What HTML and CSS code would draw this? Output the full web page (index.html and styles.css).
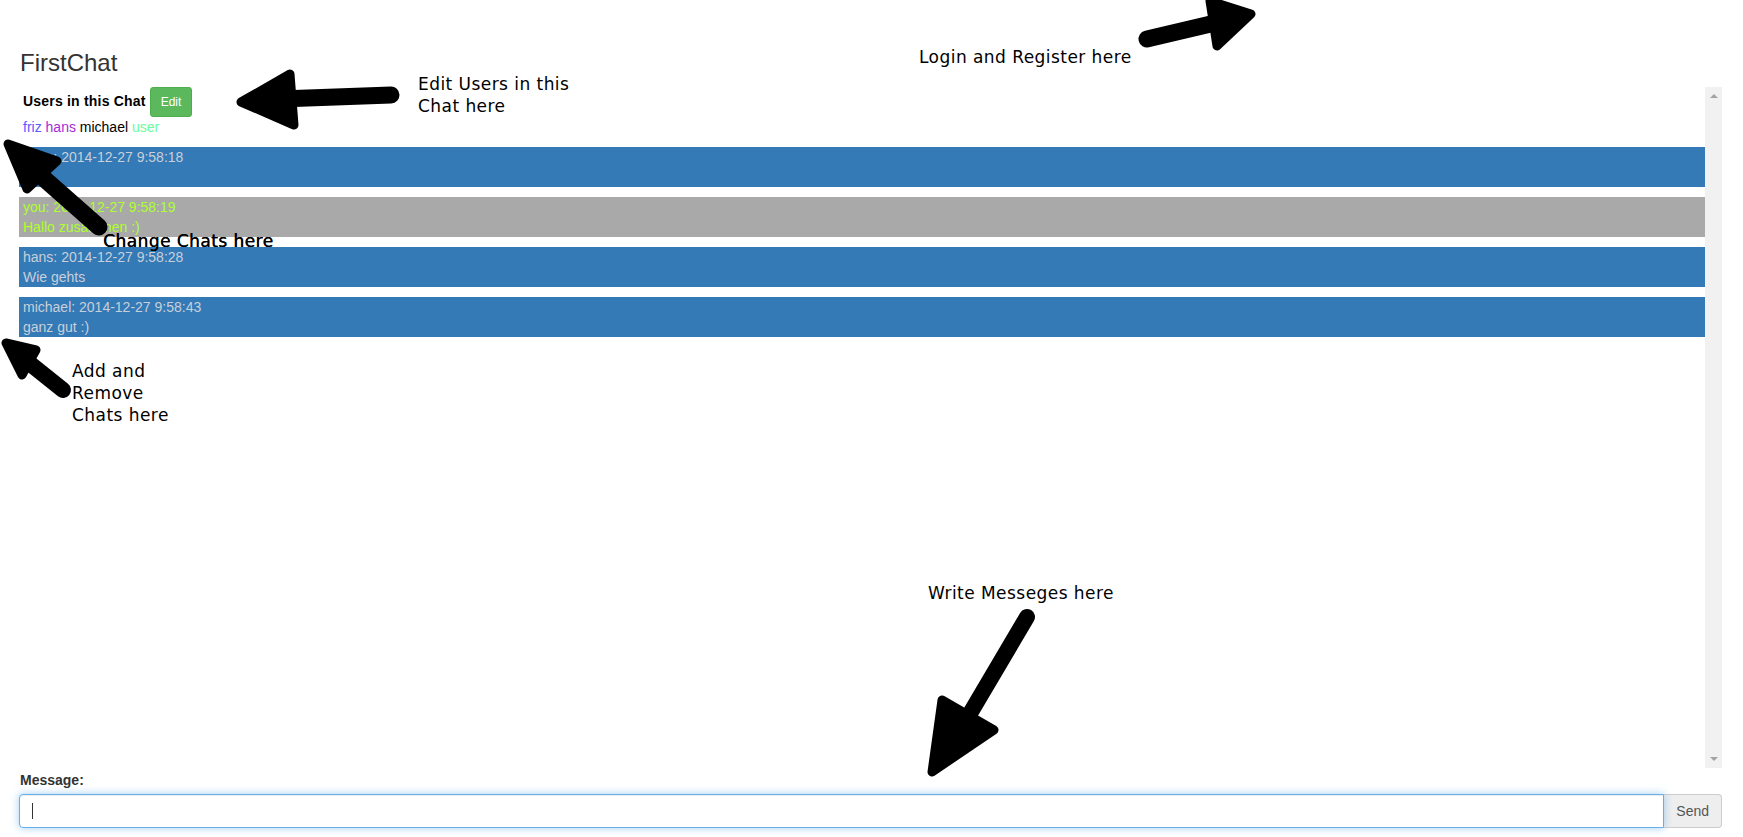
FILE: index.html
```html
<!DOCTYPE html>
<html lang="de">
<head>
<meta charset="utf-8">
<title>FirstChat</title>
<link rel="stylesheet" href="styles.css">
</head>
<body>
<div class="page">
  <h3 class="brand">FirstChat</h3>
  <div class="chat-frame">
    <div class="chat-scroll">
      <div class="users-head">
        <span class="users-title">Users in this Chat</span>
        <button class="btn-edit">Edit</button>
      </div>
      <div class="users-list">
        <span class="u-friz">friz</span> <span class="u-hans">hans</span> <span class="u-michael">michael</span> <span class="u-user">user</span>
      </div>
      <div class="msg msg-other">
        <div>hans: 2014-12-27 9:58:18</div>
        <div>&nbsp;</div>
      </div>
      <div class="msg msg-own">
        <div>you: 2014-12-27 9:58:19</div>
        <div>Hallo zusammen :)</div>
      </div>
      <div class="msg msg-other">
        <div>hans: 2014-12-27 9:58:28</div>
        <div>Wie gehts</div>
      </div>
      <div class="msg msg-other">
        <div>michael: 2014-12-27 9:58:43</div>
        <div>ganz gut :)</div>
      </div>
    </div>
    <div class="scrollbar">
      <span class="sb-up"></span>
      <span class="sb-down"></span>
    </div>
  </div>
  <label class="msg-label">Message:</label>
  <div class="input-group">
    <div class="field" role="textbox"><span class="caret"></span></div>
    <span class="addon">Send</span>
  </div>
</div>

<div class="note note-login">Login and Register here</div>
<div class="note note-edit">Edit Users in this<br>Chat here</div>
<div class="note note-change">Change Chats here</div>
<div class="note note-add">Add and<br>Remove<br>Chats here</div>
<div class="note note-write">Write Messeges here</div>

<svg class="arrows" width="1743" height="837" viewBox="0 0 1743 837">
  <g stroke="#000" fill="#000" stroke-linecap="round" stroke-linejoin="round">
    <line x1="1147" y1="39" x2="1215" y2="23" stroke-width="17"/>
    <polygon points="1210,1 1251,14 1217,46" stroke-width="9"/>

    <line x1="280" y1="99" x2="391" y2="95" stroke-width="17"/>
    <polygon points="241,102 290,74 294,125" stroke-width="9"/>

    <line x1="40" y1="175" x2="99" y2="227" stroke-width="17"/>
    <polygon points="8,144 57,161 27,189" stroke-width="9"/>

    <line x1="28" y1="362" x2="63" y2="390" stroke-width="16"/>
    <polygon points="6,343 36,350 22,375" stroke-width="9"/>

    <line x1="1027" y1="617" x2="965" y2="722" stroke-width="16"/>
    <polygon points="932,772 942,700 994,730" stroke-width="9"/>
  </g>
</svg>
</body>
</html>
```
FILE: styles.css
```css
html, body {
  margin: 0;
  padding: 0;
  background: #fff;
}

body {
  font-family: "Liberation Sans", Arial, sans-serif;
  font-size: 14px;
  line-height: 20px;
  color: #333;
  position: relative;
  width: 1743px;
  height: 837px;
  overflow: hidden;
}

.page {
  padding: 0 21px 0 19px;
}

.brand {
  margin: 50px 0 11px 1px;
  font-size: 24px;
  line-height: 26px;
  font-weight: normal;
  color: #333;
}

.chat-frame {
  display: flex;
  height: 681px;
}

.chat-scroll {
  flex: 1;
  min-width: 0;
}

.users-head {
  display: flex;
  align-items: baseline;
  gap: 4px;
  padding-left: 4px;
  height: 30px;
}

.users-title {
  font-size: 14px;
  font-weight: bold;
  letter-spacing: 0.2px;
  color: #000;
}

.btn-edit {
  font-family: "Liberation Sans", Arial, sans-serif;
  font-size: 12px;
  line-height: 18px;
  padding: 5px 10px;
  color: #fff;
  background: #5cb85c;
  border: 1px solid #4cae4c;
  border-radius: 3px;
}

.users-list {
  padding-left: 4px;
  height: 20px;
}

.u-friz { color: #5b5bff; }
.u-hans { color: #a62bd4; }
.u-michael { color: #000; }
.u-user { color: #6cfc9a; }

.msg {
  margin-top: 10px;
  padding: 0 4px;
  height: 40px;
}

.msg-other {
  background: #337ab7;
  color: #c9cfd8;
}

.msg-own {
  background: #a9a9a9;
  color: #adff2f;
}

.scrollbar {
  width: 17px;
  background: #f1f1f1;
  display: flex;
  flex-direction: column;
  justify-content: space-between;
  align-items: center;
  padding: 7px 0;
  box-sizing: border-box;
}

.sb-up {
  width: 0;
  height: 0;
  border-left: 4px solid transparent;
  border-right: 4px solid transparent;
  border-bottom: 4px solid #a3a3a3;
}

.sb-down {
  width: 0;
  height: 0;
  border-left: 4px solid transparent;
  border-right: 4px solid transparent;
  border-top: 4px solid #a3a3a3;
}

.msg-label {
  display: block;
  margin: 2px 0 4px 1px;
  font-weight: bold;
  font-size: 14px;
  color: #333;
}

.input-group {
  display: flex;
  height: 34px;
}

.field {
  flex: 1;
  border: 1px solid #66afe9;
  border-radius: 4px 0 0 4px;
  box-shadow: inset 0 1px 1px rgba(0, 0, 0, .075), 0 0 8px rgba(102, 175, 233, .6);
  padding: 0 12px;
  display: flex;
  align-items: center;
  background: #fff;
  position: relative;
}

.caret {
  display: block;
  width: 1px;
  height: 16px;
  background: #333;
}

.addon {
  display: flex;
  align-items: center;
  padding: 0 12px;
  background: #eee;
  border: 1px solid #ccc;
  border-left: 0;
  border-radius: 0 4px 4px 0;
  color: #555;
  font-size: 14px;
}

.note {
  position: absolute;
  font-family: "DejaVu Sans", Verdana, sans-serif;
  font-size: 17px;
  line-height: 22px;
  letter-spacing: 0.45px;
  color: #000;
  white-space: nowrap;
}

.note-login { left: 919px; top: 46px; }
.note-edit { left: 418px; top: 73px; }
.note-change { left: 103px; top: 230px; text-shadow: 0.4px 0 0 #000; }
.note-add { left: 72px; top: 360px; }
.note-write { left: 928px; top: 582px; }

.arrows {
  position: absolute;
  left: 0;
  top: 0;
  pointer-events: none;
}
```
